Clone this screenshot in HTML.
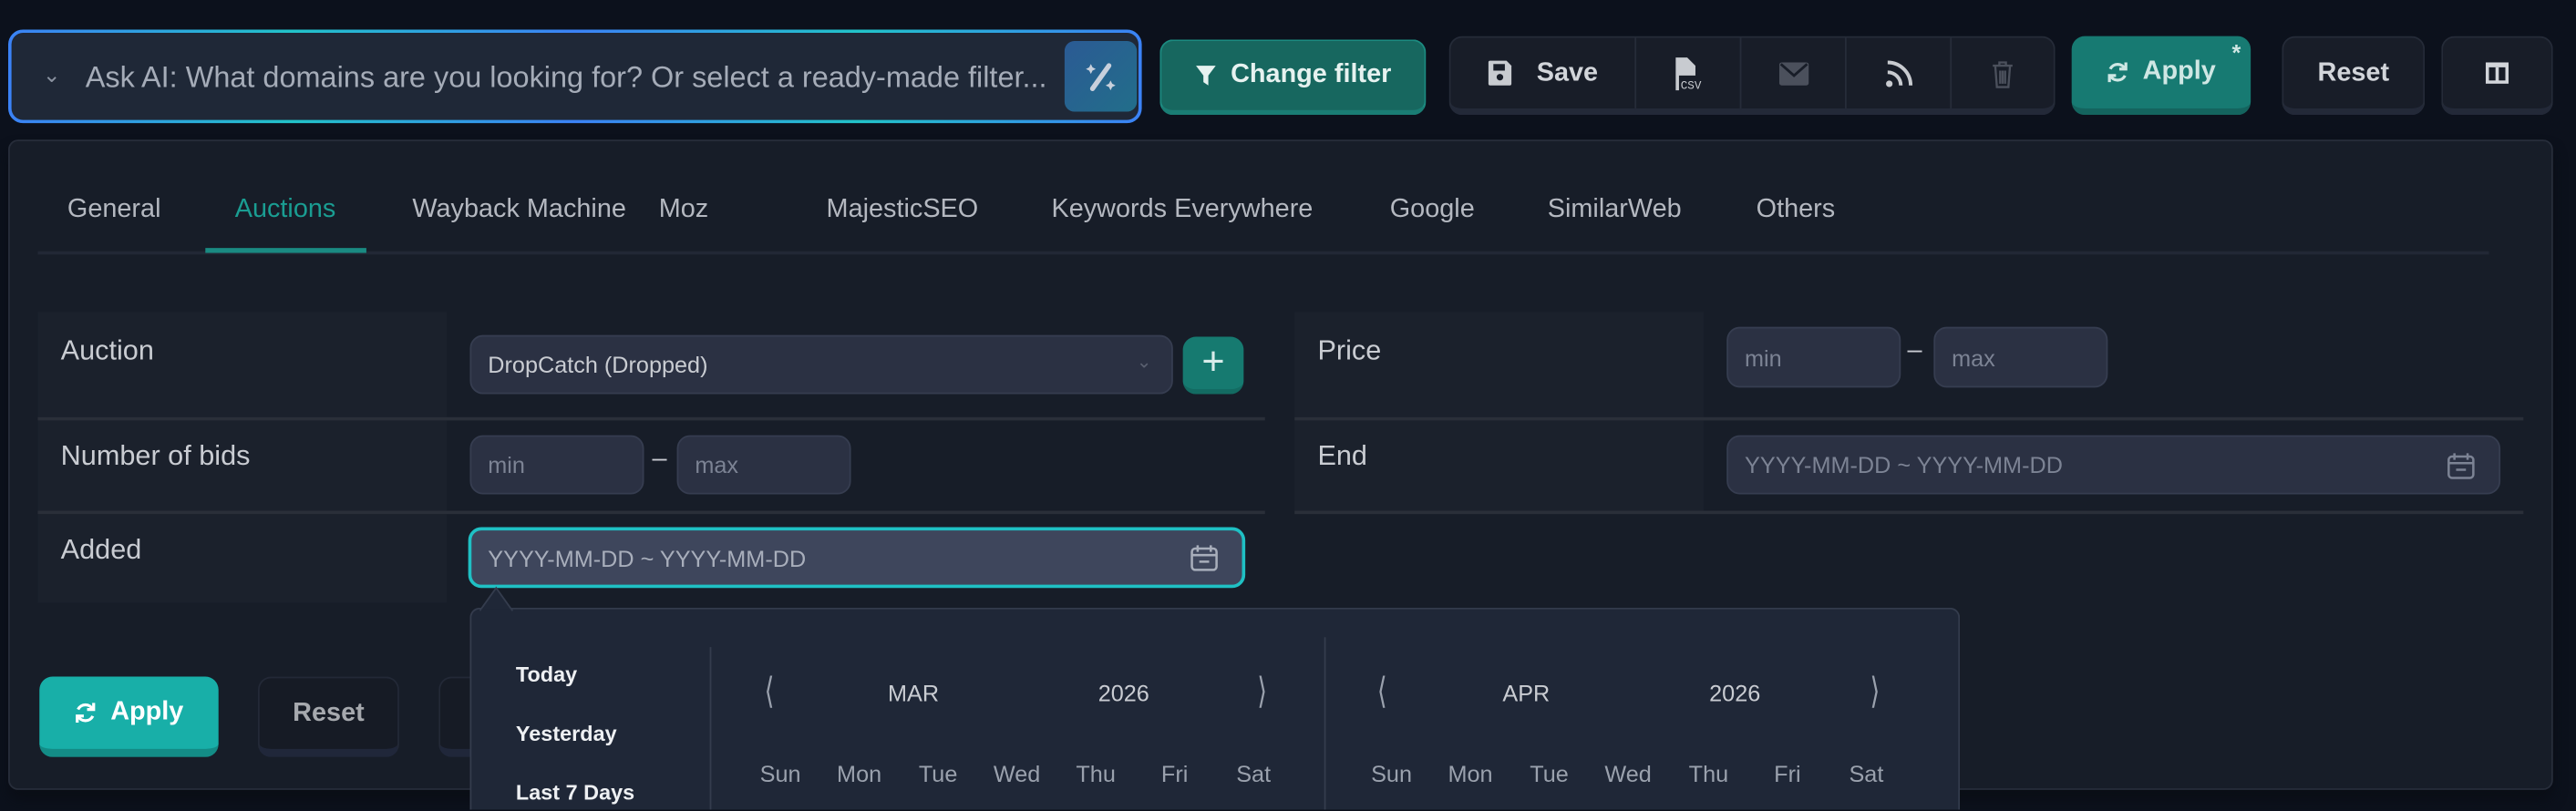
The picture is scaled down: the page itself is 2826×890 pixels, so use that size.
<!DOCTYPE html>
<html><head><meta charset="utf-8"><style>
*{box-sizing:border-box;margin:0;padding:0}
html,body{width:2826px;height:890px;overflow:hidden;background:#0c111c}
#w{position:absolute;left:0;top:0;width:1568px;height:493.8px;overflow:hidden;transform:scale(1.80230);transform-origin:0 0;font-family:"Liberation Sans",sans-serif;color:#c9ccd2}
.a{position:absolute}
.btn{position:absolute;border-radius:8px;display:flex;align-items:center;justify-content:center;font-size:16px;font-weight:bold}
.lbl{position:absolute;background:#1b212c;font-size:17px;color:#c9ccd2;padding:14px 0 0 14px}
.inp{position:absolute;background:#2b3143;border:1px solid #363d50;border-radius:8px;font-size:14px;color:#7c8394;display:flex;align-items:center;padding-left:10px}
.line{position:absolute;height:2px;background:#2a2f39}
.tab{position:absolute;top:119px;font-size:16px;color:#b4b8c0}
.wd{position:absolute;top:463px;font-size:14px;color:#9aa1ad;width:40px;text-align:center;margin-left:-20px}
.hd{position:absolute;top:414px;font-size:14px;color:#c9ccd2;text-align:center;width:60px;margin-left:-30px}
.pr{position:absolute;left:314px;font-size:13px;color:#eef0f3;font-weight:bold}
.chev{position:absolute;top:408px;font-size:22px;color:#9aa1ad;transform:scaleX(0.7)}
</style></head><body><div id="w">
<div class="a" style="left:5px;top:18px;width:690px;height:57px;border-radius:9px;background:linear-gradient(90deg,#3b82f6,#22c3c9,#3b82f6,#22c3c9,#3b82f6);padding:2px">
<div style="width:100%;height:100%;background:#1f2837;border-radius:7px;position:relative">
<div class="a" style="left:19px;top:18px;color:#8a92a0;font-size:13px">&#8964;</div>
<div class="a" style="left:45px;top:17px;font-size:18px;color:#a5acb8;white-space:nowrap">Ask AI: What domains are you looking for? Or select a ready-made filter...</div>
<div class="a" style="left:641px;top:5px;width:44px;height:43px;border-radius:6px;background:linear-gradient(135deg,#2b5a94,#226e8a)">
<svg width="44" height="43" viewBox="0 0 44 43"><path d="M27 15 L17 29" stroke="#c8d0dc" stroke-width="3" stroke-linecap="round"/><path d="M16 14 l1 2 2 1 -2 1 -1 2 -1 -2 -2 -1 2 -1z M28 24 l1 2 2 1 -2 1 -1 2 -1-2 -2-1 2-1z" fill="#c8d0dc"/></svg></div>
</div></div>
<div class="btn" style="left:706px;top:24px;width:162px;height:46px;background:#17675f;border:1px solid #1c8b80;border-bottom:3px solid #1a7d74;color:#e6f2f0"><svg width="14" height="14" viewBox="0 0 14 14" style="margin-right:8px"><path d="M1 1h12l-4.5 6v6l-3-2v-4z" fill="#e6f2f0"/></svg>Change filter</div>
<div class="a" style="left:882px;top:22px;width:369px;height:48px;border-radius:8px;background:#181d28;border:1px solid #252b38;border-bottom:4px solid #232938;display:flex">
<div style="width:113px;border-right:1px solid #262c39;display:flex;align-items:center;justify-content:center;font-size:16px;font-weight:bold;color:#d2d5da"><svg width="16" height="17" viewBox="0 0 16 17" style="margin-right:14px"><path d="M2 1h10l3 3v11a1 1 0 0 1-1 1H2a1 1 0 0 1-1-1V2a1 1 0 0 1 1-1z" fill="#c8cbd0"/><rect x="4" y="3" width="7" height="4" fill="#181d28"/><circle cx="8" cy="11" r="2" fill="#181d28"/></svg>Save</div>
<div style="width:64px;border-right:1px solid #262c39;display:flex;align-items:center;justify-content:center"><svg width="20" height="22" viewBox="0 0 20 22"><path d="M2 1h7l5 5v6H4v9H2z" fill="#c8cbd0"/><text x="5" y="20" font-size="7" fill="#c8cbd0" font-family="Liberation Mono">CSV</text></svg></div>
<div style="width:64px;border-right:1px solid #262c39;display:flex;align-items:center;justify-content:center"><svg width="18" height="16" viewBox="0 0 18 16"><rect x="0" y="1" width="18" height="14" rx="1.5" fill="#4b505c"/><path d="M1 2l8 7 8-7" stroke="#181d28" stroke-width="1.6" fill="none"/></svg></div>
<div style="width:64px;border-right:1px solid #262c39;display:flex;align-items:center;justify-content:center"><svg width="18" height="18" viewBox="0 0 18 18"><circle cx="3" cy="15" r="2" fill="#c8cbd0"/><path d="M2 8a8 8 0 0 1 8 8M2 2a14 14 0 0 1 14 14" stroke="#c8cbd0" stroke-width="2.2" fill="none"/></svg></div>
<div style="flex:1;display:flex;align-items:center;justify-content:center"><svg width="14" height="18" viewBox="0 0 14 18"><path d="M1 4h12M5 4V2h4v2M2.5 4l1 13h7l1-13M5.5 7v8M7 7v8M8.5 7v8" stroke="#4b505c" stroke-width="1.3" fill="none"/></svg></div>
</div>
<div class="btn" style="left:1261px;top:22px;width:109px;height:48px;background:#177a72;border-bottom:4px solid #14645e;color:#cfe7e4"><svg width="14" height="14" viewBox="0 0 14 14" style="margin-right:8px"><path d="M11.5 5A5 5 0 0 0 2.5 5M2.5 9a5 5 0 0 0 9 0" stroke="#cfe7e4" stroke-width="1.8" fill="none"/><path d="M12 1v4H8M2 13V9h4" stroke="#cfe7e4" stroke-width="1.8" fill="none"/></svg>Apply<span class="a" style="right:6px;top:2px;font-size:14px">*</span></div>
<div class="btn" style="left:1389px;top:22px;width:87px;height:48px;background:#181d28;border:1px solid #252b38;border-bottom:4px solid #232938;color:#d2d5da">Reset</div>
<div class="btn" style="left:1486px;top:22px;width:68px;height:48px;background:#181d28;border:1px solid #252b38;border-bottom:4px solid #232938"><svg width="14" height="13" viewBox="0 0 14 13"><rect x="1" y="1" width="12" height="11" fill="none" stroke="#d2d5da" stroke-width="2"/><path d="M7 3v9" stroke="#d2d5da" stroke-width="2"/><path d="M1 1h12v2H1z" fill="#d2d5da"/></svg></div>
<div class="a" style="left:5px;top:85px;width:1549px;height:396px;background:#171d28;border:1px solid #272d3a;border-radius:6px;box-shadow:0 6px 8px #0a0e16"></div>
<div class="line" style="left:23px;top:153px;width:1492px;background:#222835"></div>
<div class="a" style="left:125px;top:151px;width:98px;height:3px;background:#1a8a82"></div>
<div class="tab" style="left:41px">General</div>
<div class="tab" style="left:143px;color:#1a9d92">Auctions</div>
<div class="tab" style="left:251px">Wayback Machine</div>
<div class="tab" style="left:401px">Moz</div>
<div class="tab" style="left:503px">MajesticSEO</div>
<div class="tab" style="left:640px">Keywords Everywhere</div>
<div class="tab" style="left:846px">Google</div>
<div class="tab" style="left:942px">SimilarWeb</div>
<div class="tab" style="left:1069px">Others</div>
<div class="lbl" style="left:23px;top:190px;width:249px;height:64px">Auction</div>
<div class="lbl" style="left:23px;top:256px;width:249px;height:55px;padding-top:12px">Number of bids</div>
<div class="lbl" style="left:23px;top:313px;width:249px;height:54px;padding-top:12px">Added</div>
<div class="line" style="left:23px;top:254px;width:747px"></div>
<div class="line" style="left:23px;top:311px;width:747px"></div>
<div class="lbl" style="left:788px;top:190px;width:249px;height:64px">Price</div>
<div class="lbl" style="left:788px;top:256px;width:249px;height:55px;padding-top:12px">End</div>
<div class="line" style="left:788px;top:254px;width:748px"></div>
<div class="line" style="left:788px;top:311px;width:748px"></div>
<div class="inp" style="left:286px;top:204px;width:428px;height:36px;color:#c9ccd2">DropCatch (Dropped)<span class="a" style="right:12px;top:9px;color:#5a6070;font-size:11px">&#8964;</span></div>
<div class="btn" style="left:720px;top:205px;width:37px;height:35px;background:#167a70;border-bottom:3px solid #136b62;color:#d8ecea;font-size:24px;font-weight:normal">+</div>
<div class="inp" style="left:1051px;top:199px;width:106px;height:37px">min</div>
<div class="a" style="left:1161px;top:205px;color:#c9ccd2;font-size:16px">–</div>
<div class="inp" style="left:1177px;top:199px;width:106px;height:37px">max</div>
<div class="inp" style="left:286px;top:265px;width:106px;height:36px">min</div>
<div class="a" style="left:397px;top:271px;color:#c9ccd2;font-size:16px">–</div>
<div class="inp" style="left:412px;top:265px;width:106px;height:36px">max</div>
<div class="inp" style="left:1051px;top:265px;width:471px;height:36px">YYYY-MM-DD ~ YYYY-MM-DD<svg class="a" style="right:14px;top:9px" width="18" height="18" viewBox="0 0 18 18"><rect x="1.5" y="3" width="15" height="13" rx="2" fill="none" stroke="#7c8394" stroke-width="1.4"/><path d="M1.5 7h15M5 1v4M13 1v4M6 11h6" stroke="#7c8394" stroke-width="1.4"/></svg></div>
<div class="inp" style="left:285px;top:321px;width:473px;height:37px;background:#3e465c;border:2px solid #1fc0c4;color:#a8aebb">YYYY-MM-DD ~ YYYY-MM-DD<svg class="a" style="right:14px;top:8px" width="18" height="18" viewBox="0 0 18 18"><rect x="1.5" y="3" width="15" height="13" rx="2" fill="none" stroke="#a8aebb" stroke-width="1.4"/><path d="M1.5 7h15M5 1v4M13 1v4M6 11h6" stroke="#a8aebb" stroke-width="1.4"/></svg></div>
<div class="btn" style="left:24px;top:412px;width:109px;height:49px;background:#18afa8;border-bottom:5px solid #138c86;color:#fff"><svg width="14" height="14" viewBox="0 0 14 14" style="margin-right:8px"><path d="M11.5 5A5 5 0 0 0 2.5 5M2.5 9a5 5 0 0 0 9 0" stroke="#fff" stroke-width="1.8" fill="none"/><path d="M12 1v4H8M2 13V9h4" stroke="#fff" stroke-width="1.8" fill="none"/></svg>Apply</div>
<div class="btn" style="left:157px;top:412px;width:86px;height:49px;background:#161b25;border:1px solid #232937;border-bottom:5px solid #20273a;color:#a6a9ae">Reset</div>
<div class="btn" style="left:267px;top:412px;width:40px;height:49px;background:#161b25;border:1px solid #232937;border-bottom:5px solid #20273a"></div>
<div class="a" style="left:286px;top:370px;width:907px;height:123px;background:#1f2737;border:1px solid #343c4d;border-bottom:none;border-radius:6px 6px 0 0"></div>
<svg class="a" style="left:292px;top:357px" width="22" height="15" viewBox="0 0 22 15"><path d="M0 15L10 1 20 15" fill="#1f2737" stroke="#343c4d"/><path d="M1 15h18" stroke="#1f2737" stroke-width="2"/></svg>
<div class="a" style="left:432px;top:394px;width:1px;height:99px;background:#343c4d"></div>
<div class="a" style="left:806px;top:388px;width:1px;height:105px;background:#343c4d"></div>
<div class="pr" style="top:403px">Today</div>
<div class="pr" style="top:439px">Yesterday</div>
<div class="pr" style="top:475px">Last 7 Days</div>
<div class="chev" style="left:464px">&#10216;</div>
<div class="chev" style="left:764px">&#10217;</div>
<div class="chev" style="left:837px">&#10216;</div>
<div class="chev" style="left:1137px">&#10217;</div>
<div class="hd" style="left:556px">MAR</div><div class="hd" style="left:684px">2026</div>
<div class="hd" style="left:929px">APR</div><div class="hd" style="left:1056px">2026</div>
<div class="wd" style="left:475px">Sun</div><div class="wd" style="left:523px">Mon</div><div class="wd" style="left:571px">Tue</div><div class="wd" style="left:619px">Wed</div><div class="wd" style="left:667px">Thu</div><div class="wd" style="left:715px">Fri</div><div class="wd" style="left:763px">Sat</div>
<div class="wd" style="left:847px">Sun</div><div class="wd" style="left:895px">Mon</div><div class="wd" style="left:943px">Tue</div><div class="wd" style="left:991px">Wed</div><div class="wd" style="left:1040px">Thu</div><div class="wd" style="left:1088px">Fri</div><div class="wd" style="left:1136px">Sat</div>
</div></body></html>
